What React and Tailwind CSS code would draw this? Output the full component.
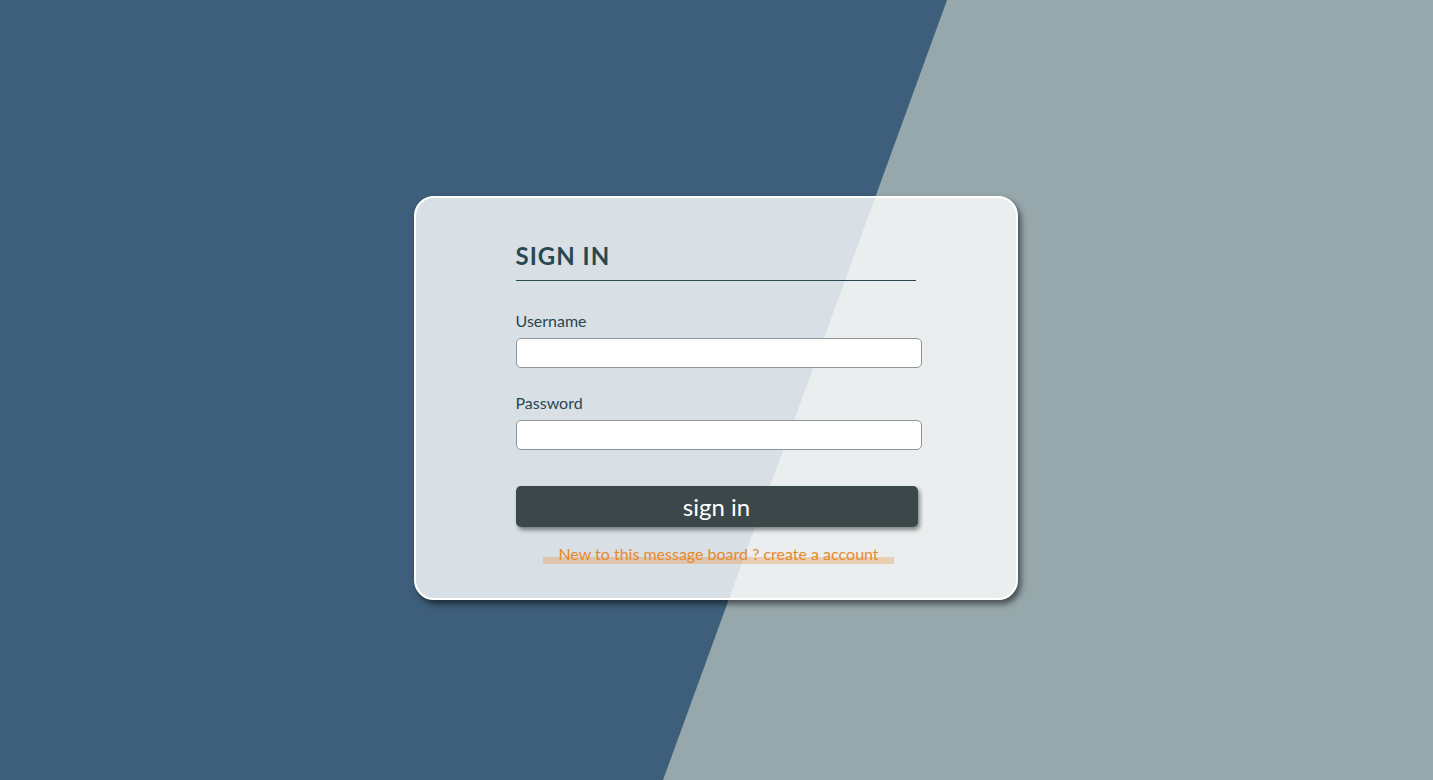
export default function App() {
  return (
    <div className="relative w-full h-[780px] overflow-hidden bg-[#3e5f7c]" style={{ fontFamily: 'Lato, "Noto Sans", sans-serif' }}>
      <div className="absolute inset-0 bg-[#97a8ac] [clip-path:polygon(66.09%_0,100%_0,100%_100%,46.27%_100%)]" />
      <div className="relative flex h-full items-center justify-center">
        <div className="mt-[16px] ml-[-2px] w-[604px] h-[404px] rounded-[20px] border-2 border-white bg-white/80 shadow-[3px_4px_6px_rgba(0,0,0,0.55)] pl-[100px] pr-[92px] pt-[41px]">
          <h1 className="text-[24px] font-bold tracking-[1px] text-[#284850] leading-[34px] w-[400px] border-b border-[#284850] pb-[7px]">SIGN IN</h1>
          <label className="block mt-[29px] text-[16px] text-[#284850] leading-[22px]">Username</label>
          <input className="block mt-[6px] w-[406px] h-[30px] rounded-[5px] border border-[#8f9496] bg-white" />
          <label className="block mt-[24px] text-[16px] text-[#284850] leading-[22px]">Password</label>
          <input type="password" className="block mt-[6px] w-[406px] h-[30px] rounded-[5px] border border-[#8f9496] bg-white" />
          <button className="block mt-[36px] w-[402px] h-[41px] rounded-[5px] bg-[#3b4749] text-white text-[24px] leading-[38px] shadow-[2px_3px_4px_rgba(0,0,0,0.45)]">sign in</button>
          <div className="mt-[17px] w-[406px] flex justify-center">
            <a className="relative text-[16px] text-[#e8892b] leading-[20px] px-[15px]">
              <span className="absolute left-0 right-0 bottom-[0px] h-[7px] bg-[#e8892b]/30" />
              <span className="relative">New to this message board ? create a account</span>
            </a>
          </div>
        </div>
      </div>
    </div>
  );
}
